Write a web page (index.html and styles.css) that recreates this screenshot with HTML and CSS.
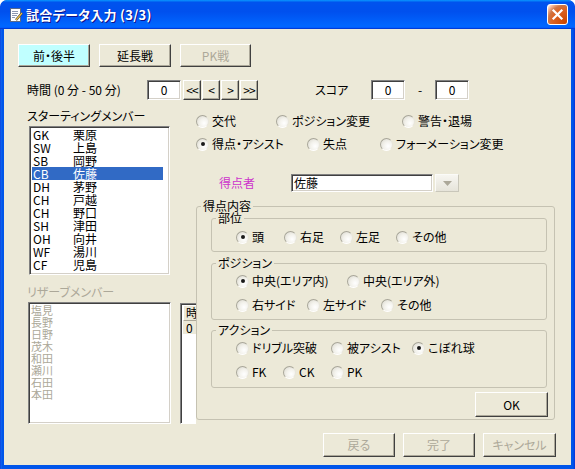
FILE: index.html
```html
<!DOCTYPE html>
<html lang="ja">
<head>
<meta charset="utf-8">
<title>試合データ入力</title>
<link rel="stylesheet" href="styles.css">
</head>
<body>
<div class="window">
  <div class="titlebar">
    <svg class="app-icon" width="16" height="16" viewBox="0 0 16 16">
      <rect x="2.5" y="1.5" width="10" height="13" fill="#fff" stroke="#5a6a8a"/>
      <path d="M4 4.5h6M4 6.5h6M4 8.5h5M4 10.5h3" stroke="#8a96b0" stroke-width="1"/>
      <path d="M14 6l-6 7" stroke="#3a3a3a" stroke-width="2.4"/>
      <path d="M14 6l-6 7" stroke="#f0c040" stroke-width="1.2"/>
    </svg>
    <span class="title">試合データ入力 (3/3)</span>
    <span class="close">
      <svg width="13" height="13" viewBox="0 0 13 13"><path d="M2.5 2.5l8 8M10.5 2.5l-8 8" stroke="#fff" stroke-width="2.2" stroke-linecap="square"/></svg>
    </span>
  </div>

  <div class="client">
    <div class="tabs">
      <button class="btn tab active">前・後半</button>
      <button class="btn tab">延長戦</button>
      <button class="btn tab off">PK戦</button>
    </div>

    <div class="time-row">
      <span class="time-label">時間 (0 分 - 50 分)</span>
      <span class="field num">0</span>
      <div class="nav">
        <button class="btn nav-btn">&lt;&lt;</button>
        <button class="btn nav-btn">&lt;</button>
        <button class="btn nav-btn">&gt;</button>
        <button class="btn nav-btn">&gt;&gt;</button>
      </div>
      <span class="score-label">スコア</span>
      <span class="field num">0</span>
      <span class="dash">-</span>
      <span class="field num">0</span>
    </div>

    <div class="main">
      <div class="left">
        <div class="caption">スターティングメンバー</div>
        <ul class="listbox starting">
          <li><span class="pos">GK</span><span>栗原</span></li>
          <li><span class="pos">SW</span><span>上島</span></li>
          <li><span class="pos">SB</span><span>岡野</span></li>
          <li class="sel"><span class="pos">CB</span><span>佐藤</span></li>
          <li><span class="pos">DH</span><span>茅野</span></li>
          <li><span class="pos">CH</span><span>戸越</span></li>
          <li><span class="pos">CH</span><span>野口</span></li>
          <li><span class="pos">SH</span><span>津田</span></li>
          <li><span class="pos">OH</span><span>向井</span></li>
          <li><span class="pos">WF</span><span>湯川</span></li>
          <li><span class="pos">CF</span><span>児島</span></li>
        </ul>
        <div class="caption reserve-caption">リザーブメンバー</div>
        <ul class="listbox reserve">
          <li>塩見</li><li>長野</li><li>日野</li><li>茂木</li>
          <li>和田</li><li>瀬川</li><li>石田</li><li>本田</li>
        </ul>
      </div>

      <div class="right">
        <div class="radio-row first">
          <span class="opt w80"><span class="radio"></span>交代</span>
          <span class="opt w126"><span class="radio"></span>ポジション変更</span>
          <span class="opt"><span class="radio"></span>警告・退場</span>
        </div>
        <div class="radio-row second">
          <span class="opt w111"><span class="radio on"></span>得点・アシスト</span>
          <span class="opt w73"><span class="radio"></span>失点</span>
          <span class="opt"><span class="radio"></span>フォーメーション変更</span>
        </div>

        <div class="scorer-row">
          <span class="scorer-label">得点者</span>
          <span class="field combo-text">佐藤</span>
          <span class="combo-btn"><svg width="9" height="5" viewBox="0 0 9 5"><path d="M0 0h9L4.5 5z" fill="#aca899"/></svg></span>
        </div>

        <div class="lower">
          <div class="listview">
            <div class="lv-head">時</div>
            <div class="lv-row">0</div>
          </div>
          <fieldset class="group main-group">
            <legend>得点内容</legend>
            <div class="main-body">
              <fieldset class="group sub">
                <legend>部位</legend>
                <div class="sub-body body-part">
                  <div class="radio-row">
                    <span class="opt w48"><span class="radio on"></span>頭</span>
                    <span class="opt w56"><span class="radio"></span>右足</span>
                    <span class="opt w56"><span class="radio"></span>左足</span>
                    <span class="opt"><span class="radio"></span>その他</span>
                  </div>
                </div>
              </fieldset>
              <fieldset class="group sub position">
                <legend>ポジション</legend>
                <div class="sub-body">
                  <div class="radio-row">
                    <span class="opt w111"><span class="radio on"></span>中央(エリア内)</span>
                    <span class="opt"><span class="radio"></span>中央(エリア外)</span>
                  </div>
                  <div class="radio-row">
                    <span class="opt w71"><span class="radio"></span>右サイド</span>
                    <span class="opt w74"><span class="radio"></span>左サイド</span>
                    <span class="opt"><span class="radio"></span>その他</span>
                  </div>
                </div>
              </fieldset>
              <fieldset class="group sub action">
                <legend>アクション</legend>
                <div class="sub-body action-body">
                  <div class="radio-row">
                    <span class="opt w95"><span class="radio"></span>ドリブル突破</span>
                    <span class="opt w81"><span class="radio"></span>被アシスト</span>
                    <span class="opt"><span class="radio on"></span>こぼれ球</span>
                  </div>
                  <div class="radio-row">
                    <span class="opt w47"><span class="radio"></span>FK</span>
                    <span class="opt w48"><span class="radio"></span>CK</span>
                    <span class="opt"><span class="radio"></span>PK</span>
                  </div>
                </div>
              </fieldset>
              <div class="ok-row"><button class="btn ok">OK</button></div>
            </div>
          </fieldset>
        </div>
      </div>
    </div>

    <div class="footer">
      <button class="btn foot off">戻る</button>
      <button class="btn foot off">完了</button>
      <button class="btn foot off wide">キャンセル</button>
    </div>
  </div>
</div>
</body>
</html>
```

FILE: styles.css
```css
* { box-sizing: border-box; }

html, body {
  margin: 0;
  padding: 0;
  background: #ffffff;
}

body {
  font-family: "Noto Sans CJK JP", "Noto Sans", sans-serif;
  font-size: 12px;
  line-height: 16px;
  color: #000;
  font-feature-settings: "palt";
}

.window {
  width: 575px;
  height: 469px;
  background: linear-gradient(to right, #0831d9 0, #166aee 1px, #0055ea 2px, #0055ea 573px, #0831d9 575px);
  border-radius: 7px 7px 0 0;
  display: flex;
  flex-direction: column;
  overflow: hidden;
}

.titlebar {
  height: 29px;
  flex: none;
  display: flex;
  align-items: center;
  padding: 0 7px 0 8px;
  background: linear-gradient(180deg, #0997ff, #0053ee 8%, #0050ee 40%, #0066ff 88%, #0066ff 93%, #005bff 95%, #003dd7 96%, #003dd7);
  border-radius: 7px 7px 0 0;
}

.app-icon { flex: none; margin-right: 2px; margin-top: 1px; }

.title {
  flex: 1;
  color: #fff;
  font-weight: bold;
  font-size: 13px;
  letter-spacing: 0.3px;
  white-space: pre;
  text-shadow: 1px 1px #0f1089;
}

.close {
  width: 21px;
  height: 21px;
  flex: none;
  border: 1px solid #fff;
  border-radius: 3px;
  display: flex;
  align-items: center;
  justify-content: center;
  background: radial-gradient(circle at 90% 90%, #cc4600 0, #dc6527 55%, #cd7546 70%, #ffccb2 90%, #fff 100%);
}

.client {
  flex: 1;
  margin: 0 4px 4px;
  background: #ece9d8;
  padding: 0 15px 0 14px;
}

/* buttons */
.btn {
  font: inherit;
  font-feature-settings: "palt";
  color: #000;
  background: #ece9d8;
  border: 1px solid;
  border-color: #fff #404040 #404040 #fff;
  box-shadow: inset -1px -1px 0 #aca899;
  padding: 0;
  margin: 0;
  line-height: 16px;
}
.btn.off { color: #aca899; }

.tabs {
  display: flex;
  gap: 9px;
  margin-top: 15px;
}
.tab { width: 72px; height: 23px; }
.tab.off { width: 71px; }
.tab.active { background: #c0ffff; }

.time-row {
  display: flex;
  align-items: center;
  height: 20px;
  margin-top: 13px;
  padding-left: 9px;
}
.time-label { width: 120px; white-space: pre; }

.field {
  background: #fff;
  border: 1px solid;
  border-color: #808080 #fff #fff #808080;
  box-shadow: inset 1px 1px 0 #404040, inset -1px -1px 0 #d4d0c8;
}
.num {
  width: 34px;
  height: 20px;
  text-align: center;
  line-height: 17px;
}

.nav { display: flex; gap: 1px; margin-left: 2px; }
.nav-btn {
  width: 18px;
  height: 20px;
  letter-spacing: -1px;
  font-size: 12px;
}
.score-label { width: 56px; margin-left: 57px; }
.dash { width: 30px; text-align: center; }

/* main area */
.main {
  display: flex;
  gap: 8px;
  margin-top: 8px;
  margin-left: 9px;
}
.left { width: 145px; flex: none; }
.right { width: 376px; flex: none; }

.caption { height: 16px; }
.reserve-caption { color: #aca899; margin-top: 9px; }

.listbox {
  list-style: none;
  margin: 2px 0 0;
  background: #fff;
  border: 1px solid;
  border-color: #808080 #fff #fff #808080;
  box-shadow: inset 1px 1px 0 #404040, inset -1px -1px 0 #d4d0c8;
  padding: 1px;
}
.starting { margin-left: 2px; width: 141px; height: 149px; }
.starting li {
  display: flex;
  height: 13px;
  line-height: 13px;
  width: 131px;
  margin-left: 1px;
  padding-left: 1px;
}
.starting .pos { width: 40px; }
.starting li.sel { background: #316ac5; color: #fff; }

.reserve { margin-left: 1px; width: 143px; height: 122px; }
.reserve li {
  height: 12px;
  line-height: 12px;
  font-size: 11px;
  padding-left: 1px;
  color: #aca899;
}

/* radios */
.radio-row {
  display: flex;
  align-items: center;
  height: 16px;
}
.right > .radio-row { padding-left: 16px; }
.right > .radio-row.first { margin-top: 5px; }
.right > .radio-row.second { margin-top: 7px; }

.opt { display: inline-flex; align-items: center; white-space: nowrap; }
.w47 { width: 47px; } .w48 { width: 48px; } .w56 { width: 56px; }
.w71 { width: 71px; } .w73 { width: 73px; } .w74 { width: 74px; }
.w80 { width: 80px; } .w81 { width: 81px; } .w95 { width: 95px; }
.w111 { width: 111px; } .w126 { width: 126px; }

.radio {
  position: relative;
  flex: none;
  width: 13px;
  height: 13px;
  margin-right: 3px;
  border-radius: 50%;
  border: 1px solid;
  border-color: #a8a699 #e8e6dc #ffffff #a8a699;
  background: radial-gradient(circle at 65% 65%, #ffffff 0, #f3f2ec 45%, #d8d6cc 100%);
}
.radio.on::after {
  content: "";
  position: absolute;
  left: 3.5px;
  top: 3.5px;
  width: 4px;
  height: 4px;
  border-radius: 50%;
  background: #1a1a1a;
}

/* scorer */
.scorer-row {
  display: flex;
  align-items: center;
  height: 18px;
  margin-top: 22px;
}
.scorer-label { width: 72px; margin-left: 39px; color: #cc33cc; }
.combo-text {
  width: 142px;
  height: 18px;
  line-height: 15px;
  padding-left: 2px;
}
.combo-btn {
  width: 24px;
  height: 18px;
  margin-left: 2px;
  display: flex;
  align-items: center;
  justify-content: center;
  background: linear-gradient(#f7f6f1, #e6e4da);
  border: 1px solid;
  border-color: #fbfbf8 #c9c7ba #c9c7ba #fbfbf8;
}

/* lower */
.lower {
  display: flex;
  align-items: flex-start;
  margin-top: 8px;
}
.listview {
  width: 16px;
  height: 121px;
  margin-top: 103px;
  flex: none;
  overflow: hidden;
  white-space: nowrap;
  background: #fff;
  border: 1px solid;
  border-right: none;
  border-color: #808080 transparent #fff #808080;
  box-shadow: inset 1px 1px 0 #404040;
  padding: 1px 0 0 2px;
}
.lv-head {
  width: 60px;
  height: 16px;
  line-height: 14px;
  padding-left: 2px;
  background: #ece9d8;
  border: 1px solid;
  border-color: #fff #aca899 #aca899 #fff;
}
.lv-row {
  height: 13px;
  line-height: 13px;
  padding-left: 3px;
  background: #ece9d8;
}

.group {
  margin: 0;
  padding: 0;
  min-width: 0;
  border: 1px solid #c5c2b2;
  border-radius: 3px;
}
.group legend {
  padding: 0 2px;
  margin-left: 4px;
  line-height: 12px;
  height: 12px;
}
.main-group { width: 359px; }
.main-body { padding: 0 7px 2px 14px; }

.sub-body { padding: 4px 0 6px 24px; display: flex; flex-direction: column; gap: 8px; }
.body-part { padding-top: 5px; }
.action-body { padding-bottom: 7px; }
.position { margin-top: 5px; }
.action { margin-top: 4px; }

.ok-row {
  display: flex;
  justify-content: flex-end;
  margin-top: 4px;
  margin-right: -1px;
}
.ok { width: 73px; height: 25px; }

.footer {
  display: flex;
  justify-content: flex-end;
  gap: 8px;
  margin-top: 9px;
}
.foot { width: 72px; height: 24px; }
.foot.wide { width: 73px; }
```
